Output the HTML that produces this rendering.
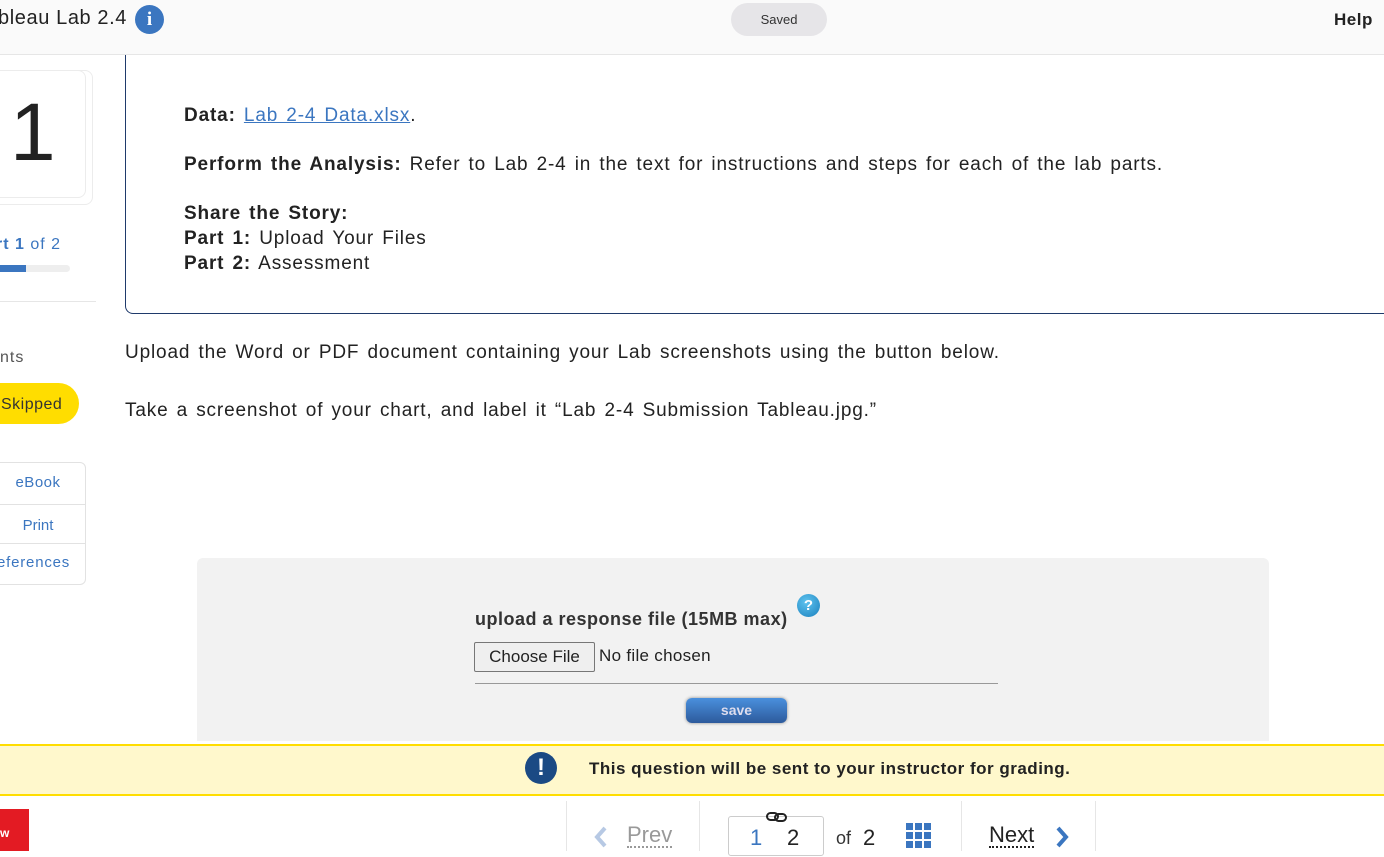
<!DOCTYPE html>
<html><head><meta charset="utf-8"><style>
*{box-sizing:border-box;margin:0;padding:0}
body{width:1384px;height:851px;overflow:hidden;background:#fff;font-family:"Liberation Sans",sans-serif;color:#222;position:relative}
.a{position:absolute}
.w{font-size:19px;letter-spacing:0.85px;word-spacing:2px}
</style></head><body>
<div class="a" style="left:0;top:0;width:1384px;height:55px;background:#fafafa;border-bottom:1px solid #e6e6e6"></div>
<div class="a" style="left:-2px;top:7px;font-size:20px;color:#222;letter-spacing:0.6px">bleau Lab 2.4</div>
<div class="a" style="left:135px;top:5px;width:29px;height:29px;border-radius:50%;background:#3b76c0;color:#fff;font:bold 19px 'Liberation Serif',serif;text-align:center;line-height:29px">i</div>
<div class="a" style="left:731px;top:3px;width:96px;height:33px;border-radius:17px;background:#e6e5e8;font-size:13px;color:#333;text-align:center;line-height:33px">Saved</div>
<div class="a" style="left:1334px;top:10px;font-size:17px;font-weight:bold;color:#222;letter-spacing:0.5px">Help</div>

<div class="a" style="left:125px;top:55px;width:1300px;height:259px;border-left:1px solid #1f3a6b;border-bottom:1px solid #1f3a6b;border-bottom-left-radius:8px"></div>
<div class="a w" style="left:184px;top:103px;line-height:25px">
<div><b>Data:</b> <span style="color:#3b76c0;text-decoration:underline">Lab 2-4 Data.xlsx</span>.</div>
<div style="margin-top:24px"><b>Perform the Analysis:</b> Refer to Lab 2-4 in the text for instructions and steps for each of the lab parts.</div>
<div style="margin-top:24px"><b>Share the Story:</b></div>
<div><b>Part 1:</b> Upload Your Files</div>
<div><b>Part 2:</b> Assessment</div>
</div>

<div class="a" style="left:-10px;top:70px;width:103px;height:135px;border:1px solid #ececec;border-radius:8px"></div>
<div class="a" style="left:-10px;top:70px;width:96px;height:128px;border:1px solid #ececec;border-radius:8px;background:#fff"></div>
<div class="a" style="left:10px;top:86px;font-size:82px;color:#222">1</div>
<div class="a" style="left:-4px;top:236px;font-size:16px;color:#3b76c0;letter-spacing:1px"><b>rt 1</b> of 2</div>
<div class="a" style="left:0;top:265px;width:70px;height:7px;border-radius:4px;background:#eee"></div>
<div class="a" style="left:0;top:265px;width:26px;height:7px;background:#3b76c0"></div>
<div class="a" style="left:0;top:301px;width:96px;height:1px;background:#e6e6e6"></div>
<div class="a" style="left:0;top:349px;font-size:16px;color:#555;letter-spacing:1px">nts</div>
<div class="a" style="left:-20px;top:383px;width:99px;height:41px;border-radius:21px;background:#ffdd00;font-size:16px;line-height:43px;padding-left:21px;color:#333;letter-spacing:0.5px">Skipped</div>
<div class="a" style="left:-10px;top:462px;width:96px;height:123px;border:1px solid #e2e2e2;border-radius:6px;font-size:15px;color:#3b76c0;text-align:center">
<div style="height:42px;line-height:40px;border-bottom:1px solid #e2e2e2;letter-spacing:0.5px">eBook</div>
<div style="height:39px;line-height:42px;border-bottom:1px solid #e2e2e2">Print</div>
<div style="line-height:38px;text-align:left;margin-left:6px;letter-spacing:0.8px">eferences</div>
</div>

<div class="a w" style="left:125px;top:342px">Upload the Word or PDF document containing your Lab screenshots using the button below.</div>
<div class="a w" style="left:125px;top:400px">Take a screenshot of your chart, and label it “Lab 2-4 Submission Tableau.jpg.”</div>

<div class="a" style="left:197px;top:558px;width:1072px;height:183px;background:#f2f2f2;border-radius:6px 6px 0 0"></div>
<div class="a" style="left:475px;top:609px;font-size:18px;font-weight:bold;color:#333;letter-spacing:0.5px">upload a response file (15MB max)</div>
<div class="a" style="left:797px;top:594px;width:23px;height:23px;border-radius:50%;background:radial-gradient(circle at 40% 35%,#5fc3ef,#1a80bd);color:#fff;font-size:15px;font-weight:bold;text-align:center;line-height:23px">?</div>
<div class="a" style="left:474px;top:642px;width:121px;height:30px;border:1px solid #777;border-radius:2px;background:#efefef;font-size:17px;text-align:center;line-height:28px">Choose File</div>
<div class="a" style="left:599px;top:646px;font-size:17px;letter-spacing:0.3px">No file chosen</div>
<div class="a" style="left:475px;top:683px;width:523px;height:1px;background:#999"></div>
<div class="a" style="left:686px;top:698px;width:101px;height:25px;border-radius:6px;background:linear-gradient(#4a90dd,#2d5a9c);box-shadow:0 0 3px #888;color:#dde;font-size:14px;font-weight:bold;text-align:center;line-height:24px">save</div>

<div class="a" style="left:0;top:744px;width:1384px;height:52px;background:#fff8cc;border-top:2px solid #ffdd00;border-bottom:2px solid #ffdd00"></div>
<div class="a" style="left:525px;top:752px;width:32px;height:32px;border-radius:50%;background:#1b4a84;color:#fff;font-size:24px;font-weight:bold;text-align:center;line-height:32px">!</div>
<div class="a" style="left:589px;top:759px;font-size:17px;font-weight:bold;color:#222;letter-spacing:0.5px">This question will be sent to your instructor for grading.</div>

<div class="a" style="left:0;top:809px;width:29px;height:42px;background:#e31b23;color:#fff;font-size:12px;font-weight:bold;line-height:48px">w</div>
<div class="a" style="left:566px;top:801px;width:1px;height:50px;background:#e6e6e6"></div>
<div class="a" style="left:699px;top:801px;width:1px;height:50px;background:#e6e6e6"></div>
<div class="a" style="left:961px;top:801px;width:1px;height:50px;background:#e6e6e6"></div>
<div class="a" style="left:1095px;top:801px;width:1px;height:50px;background:#e6e6e6"></div>
<svg class="a" style="left:594px;top:826px" width="14" height="22"><path d="M11 2 L3 11 L11 20" stroke="#b7c9e4" stroke-width="4" fill="none"/></svg>
<div class="a" style="left:627px;top:824px;font-size:22px;color:#999;border-bottom:2px dotted #999;line-height:22px">Prev</div>
<div class="a" style="left:728px;top:816px;width:96px;height:40px;border:1px solid #ccc;border-radius:3px;background:#fff"></div>
<svg class="a" style="left:765px;top:810px" width="24" height="14"><rect x="2" y="3" width="11" height="7" rx="3.5" stroke="#222" stroke-width="2" fill="none"/><rect x="10" y="4" width="11" height="7" rx="3.5" stroke="#222" stroke-width="2" fill="none"/></svg>
<div class="a" style="left:750px;top:825px;font-size:22px;color:#3b76c0">1</div>
<div class="a" style="left:787px;top:825px;font-size:22px;color:#222">2</div>
<div class="a" style="left:836px;top:828px;font-size:18px;color:#333">of</div>
<div class="a" style="left:863px;top:825px;font-size:22px;color:#222">2</div>
<svg class="a" style="left:906px;top:823px" width="26" height="28"><g fill="#3b76c0"><rect x="0" y="0" width="7" height="7"/><rect x="9" y="0" width="7" height="7"/><rect x="18" y="0" width="7" height="7"/><rect x="0" y="9" width="7" height="7"/><rect x="9" y="9" width="7" height="7"/><rect x="18" y="9" width="7" height="7"/><rect x="0" y="18" width="7" height="7"/><rect x="9" y="18" width="7" height="7"/><rect x="18" y="18" width="7" height="7"/></g></svg>
<div class="a" style="left:989px;top:824px;font-size:22px;color:#222;border-bottom:2px dotted #222;line-height:22px">Next</div>
<svg class="a" style="left:1055px;top:826px" width="14" height="22"><path d="M3 2 L11 11 L3 20" stroke="#3b76c0" stroke-width="4" fill="none"/></svg>
</body></html>
